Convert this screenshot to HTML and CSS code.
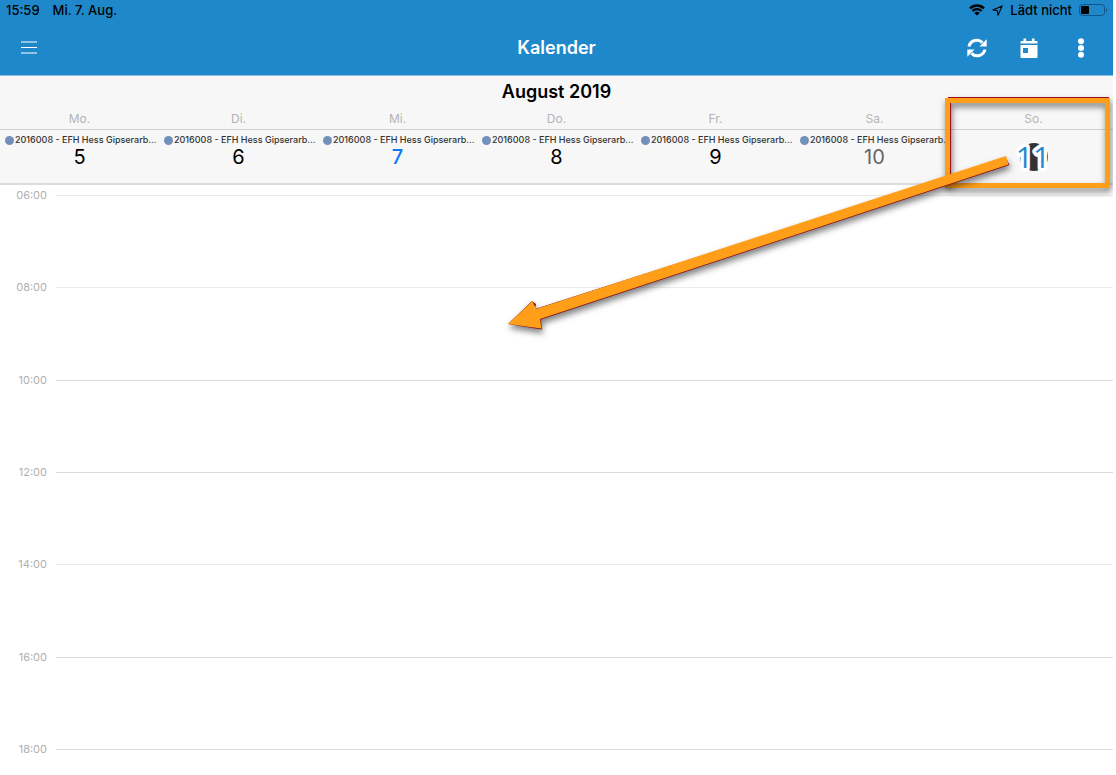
FILE: index.html
```html
<!DOCTYPE html>
<html lang="de">

<head>
    <meta charset="UTF-8">
    <meta name="viewport" content="width=device-width, initial-scale=1.0">
    <title>Kalender</title>
    <link rel="stylesheet" href="styles.css">
</head>

<body>
    <div class="page">
        <div class="status">
            <div class="status-left">
                <span>15:59</span>
                <span>Mi. 7. Aug.</span>
            </div>
            <div class="status-right">
                <svg class="wifi" width="16" height="12" viewBox="0 0 16 12">
                    <path d="M1 4.300a10 10 0 0 1 14 0M3.400 7a6.500 6.500 0 0 1 9.200 0" fill="none" stroke="#000" stroke-width="2.400" />
                    <path d="M8 11.500L5.300 9a3.800 3.800 0 0 1 5.400 0z" />
                </svg>
                <svg class="location" width="11" height="11" viewBox="0 0 11 11">
                    <path d="M10.200.9L.9 4.900l4.500.9.600 4.500z" fill="none" stroke="#000" stroke-width="1.100" stroke-linejoin="round" />
                </svg>
                <span>Lädt nicht</span>
                <svg class="battery" width="29" height="12" viewBox="0 0 29 12">
                    <rect x=".5" y=".5" width="25" height="11" rx="3" fill="none" stroke="#0f5687" />
                    <rect x="2" y="2" width="8" height="8" rx="1" />
                    <path d="M27 4v4c1.600-.6 1.600-3.400 0-4z" fill="#0f5687" />
                </svg>
            </div>
        </div>

        <div class="header">
            <button class="icon-btn" aria-label="Menü">
                <svg width="16" height="13" viewBox="0 0 16 13">
                    <path d="M0 1h16M0 6.500h16M0 12h16" stroke="#fff" stroke-width="1.200" />
                </svg>
            </button>
            <h1>Kalender</h1>
            <div class="actions">
                <button class="icon-btn" aria-label="Aktualisieren">
                    <svg width="20" height="20" viewBox="0 0 20 20">
                        <path d="M2 8.500A8 8 0 0 1 15.500 4.600M18 11.500A8 8 0 0 1 4.500 15.400" fill="none" stroke="#fff" stroke-width="3" />
                        <path d="M19.700 1.300v7.200h-7.200zM.3 18.700v-7.200h7.200z" fill="#fff" />
                    </svg>
                </button>
                <button class="icon-btn" aria-label="Heute">
                    <svg width="18" height="20" viewBox="0 0 18 20">
                        <path d="M.5 5.500V4q0-1 1-1h2V.5h2.600V3h5.800V.5h2.600V3h2q1 0 1 1v1.500z" fill="#fff" />
                        <path d="M.5 7h17v12q0 1-1 1h-15q-1 0-1-1zM3 10v5h5v-5z" fill="#fff" fill-rule="evenodd" />
                    </svg>
                </button>
                <button class="icon-btn" aria-label="Mehr">
                    <svg width="6" height="20" viewBox="0 0 6 20" fill="#fff">
                        <circle cx="3" cy="3.200" r="3" />
                        <circle cx="3" cy="10" r="3" />
                        <circle cx="3" cy="16.800" r="3" />
                    </svg>
                </button>
            </div>
        </div>

        <div class="week">
            <h2>August 2019</h2>
            <div class="weekdays">
                <span>Mo.</span>
                <span>Di.</span>
                <span>Mi.</span>
                <span>Do.</span>
                <span>Fr.</span>
                <span>Sa.</span>
                <span>So.</span>
            </div>
            <div class="days">
                <div class="day">
                    <div class="event"><i></i>2016008 - EFH Hess Gipserarb...</div>
                    <div class="num">5</div>
                </div>
                <div class="day">
                    <div class="event"><i></i>2016008 - EFH Hess Gipserarb...</div>
                    <div class="num">6</div>
                </div>
                <div class="day today">
                    <div class="event"><i></i>2016008 - EFH Hess Gipserarb...</div>
                    <div class="num">7</div>
                </div>
                <div class="day">
                    <div class="event"><i></i>2016008 - EFH Hess Gipserarb...</div>
                    <div class="num">8</div>
                </div>
                <div class="day">
                    <div class="event"><i></i>2016008 - EFH Hess Gipserarb...</div>
                    <div class="num">9</div>
                </div>
                <div class="day weekend">
                    <div class="event"><i></i>2016008 - EFH Hess Gipserarb...</div>
                    <div class="num">10</div>
                </div>
                <div class="day selected">
                    <svg class="badge" width="48" height="46" viewBox="0 0 48 46">
                        <circle cx="24" cy="24" r="14" fill="#333" />
                        <text x="23" y="35" text-anchor="middle">11</text>
                    </svg>
                </div>
            </div>
        </div>

        <div class="hours">
            <div class="hour"><span>06:00</span></div>
            <div class="hour"><span>08:00</span></div>
            <div class="hour"><span>10:00</span></div>
            <div class="hour"><span>12:00</span></div>
            <div class="hour"><span>14:00</span></div>
            <div class="hour"><span>16:00</span></div>
            <div class="hour"><span>18:00</span></div>
        </div>

        <!-- marker box and arrow on top of the calendar -->
        <svg class="marker" width="620" height="260" viewBox="493 90 620 260">
            <g class="shape">
                <path d="M950.500 103V182M948 97.500H1109" stroke="#a01018" stroke-width="1.200" fill="none" />
                <rect x="947.500" y="100.500" width="160" height="85" fill="none" stroke="#ff9e18" stroke-width="5" />
            </g>
            <g class="shape">
                <path d="M508 324l24-23 4 3-1 5L1006 158l3.500 7L541 319.500l1 10z" fill="#8a0d18" />
                <path d="M508 324l24.500-23 3.500 8L1006 156l2.500 8.500L540 319l1.500 9.500z" fill="#ff9e18" />
            </g>
        </svg>
    </div>
</body>

</html>
```
FILE: styles.css
```css
* {
    margin: 0;
    padding: 0;
    box-sizing: border-box;
}

body {
    background: #fff;
    font-family: Inter, "Liberation Sans", sans-serif;
}

svg {
    display: block;
}

.page {
    position: relative;
    display: flex;
    flex-direction: column;
    min-height: 100vh;
    margin-right: 3px;
    overflow: hidden;
}

/* status bar */
.status {
    display: flex;
    justify-content: space-between;
    height: 20px;
    padding: 0 5px 0 6px;
    background: #1e88ca;
    font-size: 13px;
    font-weight: 500;
    line-height: 20px;
}

.status-left,
.status-right {
    display: flex;
    align-items: center;
}

.status-left {
    gap: 13px;
}

.status-right {
    gap: 7px;
}

/* title bar */
.header {
    display: grid;
    grid-template-columns: 1fr auto 1fr;
    align-items: center;
    height: 56px;
    padding: 0 16px;
    background: #1e88ca;
    border-bottom: 1px solid #8fbfe0;
    color: #fff;
}

.header h1 {
    font-size: 18px;
    font-weight: 600;
    line-height: 24px;
}

.icon-btn {
    display: flex;
    align-items: center;
    justify-content: center;
    width: 26px;
    height: 32px;
    border: 0;
    background: none;
    cursor: pointer;
}

.actions {
    display: flex;
    justify-content: flex-end;
    gap: 26px;
    padding-right: 3px;
}

/* week header */
.week {
    background: #f7f7f7;
    border-bottom: 2px solid #dcdcdc;
    text-align: center;
}

.week h2 {
    font-size: 18px;
    font-weight: 600;
    line-height: 32px;
}

.weekdays,
.days {
    display: grid;
    grid-template-columns: repeat(7, minmax(0, 1fr));
}

.weekdays {
    height: 22px;
    border-bottom: 1px solid #d2d2d2;
    color: #b4b4b4;
    font-size: 12px;
    line-height: 21px;
}

.days {
    height: 53px;
    padding-top: 3px;
}

.event {
    display: flex;
    align-items: center;
    gap: 1px;
    height: 14px;
    padding-left: 5px;
    color: #333;
    font-size: 9px;
    font-weight: 500;
    line-height: 14px;
    white-space: nowrap;
}

.event i {
    flex: none;
    width: 9px;
    height: 9px;
    border-radius: 50%;
    background: #7390bb;
}

.num {
    font-size: 20px;
    line-height: 20px;
}

.today .num {
    color: #0a7cf5;
    font-weight: 500;
}

.weekend .num {
    color: #666;
}

.badge {
    margin: 0 auto;
}

.badge text {
    fill: #1e88d0;
    stroke: #fff;
    stroke-width: 7px;
    stroke-linejoin: round;
    paint-order: stroke;
    font-family: "Open Sans", sans-serif;
    font-size: 30px;
}

/* time grid */
.hours {
    flex: 1;
    display: grid;
    grid-template-rows: repeat(6, 1fr) 16px;
    padding: 2px 0 18px 16px;
}

.hour {
    display: flex;
    gap: 9px;
    color: #b0b0b0;
    font-size: 11px;
    line-height: 16px;
}

.hour span {
    width: 31px;
    text-align: right;
}

.hour::after {
    content: "";
    flex: 1;
    height: 1px;
    margin-top: 8px;
    background: #dcdcdc;
}

.hour:nth-child(-n+2)::after,
.hour:nth-child(5)::after {
    background: #ebebeb;
}

/* marker */
.marker {
    position: absolute;
    top: 90px;
    right: 0;
    pointer-events: none;
}

.shape {
    filter: drop-shadow(1px 4px 3px rgba(0, 0, 0, .5));
}
```
